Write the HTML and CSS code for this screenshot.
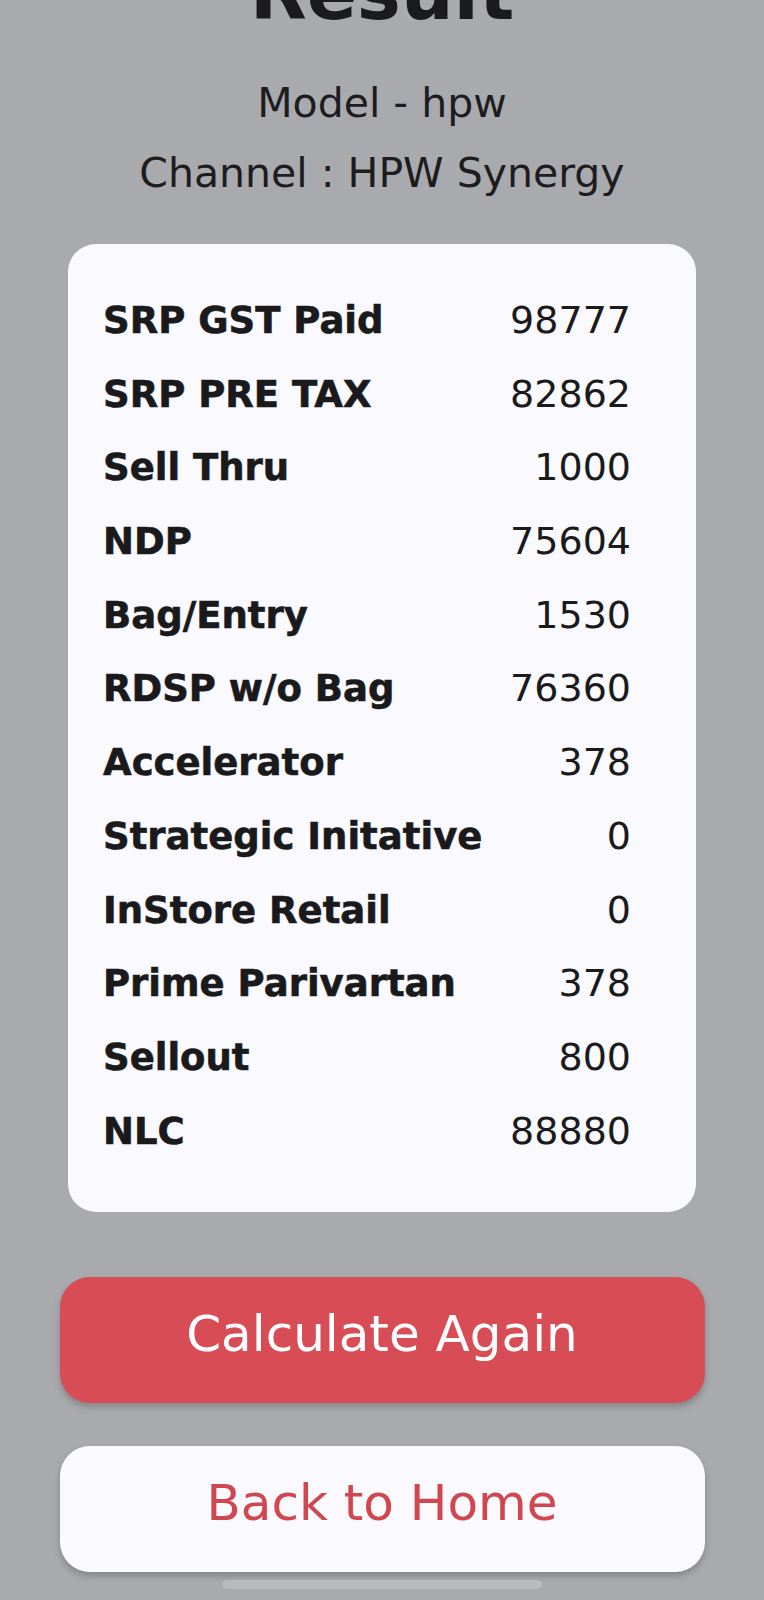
FILE: index.html
```html
<!DOCTYPE html>
<html lang="en">
<head>
<meta charset="utf-8">
<title>Result</title>
<link rel="stylesheet" href="styles.css">
</head>
<body>
<main class="screen">
  <h1 class="title">Result</h1>
  <div class="subtitle">
    <p class="sub-line">Model - hpw</p>
    <p class="sub-line">Channel : HPW Synergy</p>
  </div>
  <section class="card">
    <div class="row"><span class="label">SRP GST Paid</span><span class="value">98777</span></div>
    <div class="row"><span class="label">SRP PRE TAX</span><span class="value">82862</span></div>
    <div class="row"><span class="label">Sell Thru</span><span class="value">1000</span></div>
    <div class="row"><span class="label">NDP</span><span class="value">75604</span></div>
    <div class="row"><span class="label">Bag/Entry</span><span class="value">1530</span></div>
    <div class="row"><span class="label">RDSP w/o Bag</span><span class="value">76360</span></div>
    <div class="row"><span class="label">Accelerator</span><span class="value">378</span></div>
    <div class="row"><span class="label">Strategic Initative</span><span class="value">0</span></div>
    <div class="row"><span class="label">InStore Retail</span><span class="value">0</span></div>
    <div class="row"><span class="label">Prime Parivartan</span><span class="value">378</span></div>
    <div class="row"><span class="label">Sellout</span><span class="value">800</span></div>
    <div class="row"><span class="label">NLC</span><span class="value">88880</span></div>
  </section>
  <button class="btn btn-primary" type="button">Calculate Again</button>
  <button class="btn btn-secondary" type="button">Back to Home</button>
  <div class="home-indicator"></div>
</main>
</body>
</html>
```
FILE: styles.css
```css
html, body {
  margin: 0;
  padding: 0;
}

body {
  background: #a9aaae;
  font-family: "DejaVu Sans", "Liberation Sans", sans-serif;
  color: #1b1b1d;
}

.screen {
  width: 764px;
  height: 1600px;
  overflow: hidden;
  display: flex;
  flex-direction: column;
  align-items: center;
}

.title {
  margin: -44px 0 0 0;
  font-size: 74px;
  line-height: 74px;
  font-weight: 700;
  color: #1b1b1d;
}

.subtitle {
  margin-top: 38px;
  display: flex;
  flex-direction: column;
  align-items: center;
}

.sub-line {
  margin: 0;
  font-size: 41px;
  line-height: 70px;
  font-weight: 400;
  color: #1d1d1f;
}

.card {
  box-sizing: border-box;
  margin-top: 36px;
  width: 628px;
  height: 968px;
  padding: 40px 65px 0 35px;
  background: #f9f9fe;
  border-radius: 28px;
}

.row {
  display: flex;
  justify-content: space-between;
  align-items: baseline;
  line-height: 73.7px;
  height: 73.7px;
}

.label {
  font-size: 37px;
  font-weight: 700;
  color: #1a1a1c;
  -webkit-text-stroke: 0.6px #1a1a1c;
}

.value {
  font-size: 38px;
  font-weight: 400;
  color: #1a1a1c;
}

.btn {
  box-sizing: border-box;
  width: 645px;
  height: 126px;
  border: none;
  border-radius: 30px;
  font-family: "DejaVu Sans", "Liberation Sans", sans-serif;
  font-size: 50px;
  line-height: 114px;
  padding: 0 0 12px 0;
  text-align: center;
  box-shadow: 0 4px 7px rgba(0, 0, 0, 0.22);
}

.btn-primary {
  margin-top: 65px;
  background: #d84c55;
  color: #ffffff;
}

.btn-secondary {
  margin-top: 43px;
  background: #f9f9fe;
  color: #d1474f;
}

.home-indicator {
  margin-top: 8px;
  width: 320px;
  height: 9px;
  border-radius: 5px;
  background: #b9babd;
}
```
